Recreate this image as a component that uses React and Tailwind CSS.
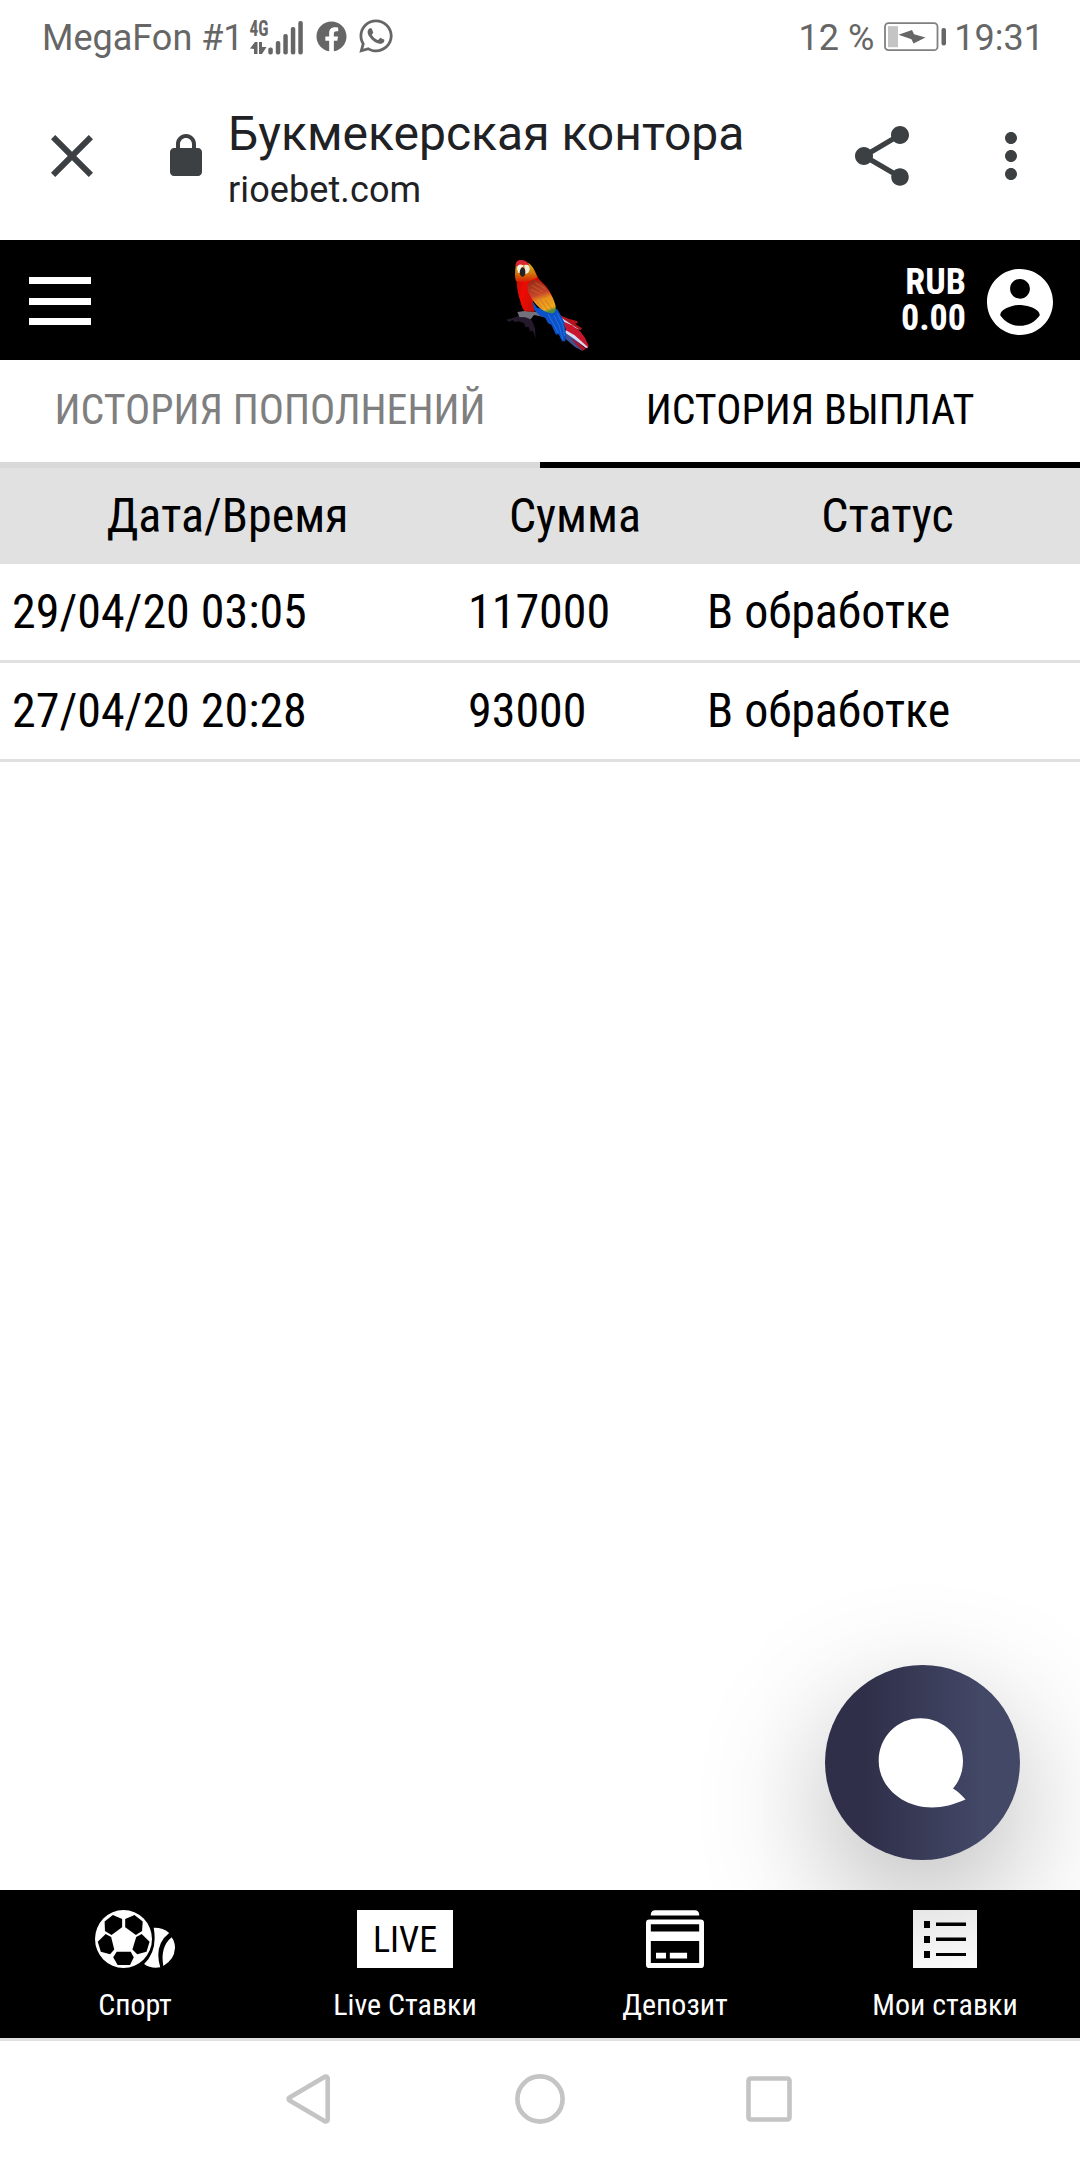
import React from 'react'
import { MdClose, MdShare, MdMoreVert } from 'react-icons/md'
import { FaFacebook, FaWhatsapp } from 'react-icons/fa'

const payouts = [
  { date: '29/04/20 03:05', sum: '117000', status: 'В обработке' },
  { date: '27/04/20 20:28', sum: '93000', status: 'В обработке' }
]

const menu = [
  { label: 'Спорт', icon: <SportIcon /> },
  { label: 'Live Ставки', icon: <LiveIcon /> },
  { label: 'Депозит', icon: <DepositIcon /> },
  { label: 'Мои ставки', icon: <BetsIcon /> }
]

export default function App(){
  return (
    <div className="w-[1080px] h-[2160px] flex flex-col bg-white overflow-hidden font-[Roboto,sans-serif]">
      <StatusBar />
      <BrowserBar />

      {/* page */}
      <div className="relative h-[1798px] flex flex-col overflow-hidden text-black font-['Roboto_Condensed',Roboto,sans-serif]">
        <Header />

        {/* tabs */}
        <div className="grid grid-cols-2 text-[42px] leading-[99px] text-center">
          <div className="h-[108px] border-b-6 border-[#d9d9d9] text-[#7f7f7f]">ИСТОРИЯ ПОПОЛНЕНИЙ</div>
          <div className="h-[108px] border-b-6 border-black">ИСТОРИЯ ВЫПЛАТ</div>
        </div>

        {/* payout table */}
        <div className="text-[48px] leading-[96px]">
          <div className="grid grid-cols-[455px_240px_385px] bg-[#e1e1e1] text-center">
            <div>Дата/Время</div>
            <div>Сумма</div>
            <div>Статус</div>
          </div>
          {payouts.map(p => (
            <div key={p.date} className="grid grid-cols-[456px_240px_384px] border-b-3 border-[#e0e0e0]">
              <div className="px-3">{p.date}</div>
              <div className="px-3">{p.sum}</div>
              <div className="px-[11px]">{p.status}</div>
            </div>
          ))}
        </div>

        {/* bottom menu */}
        <nav className="mt-auto h-[148px] grid grid-cols-4 bg-black text-white">
          {menu.map(m => (
            <div key={m.label} className="flex flex-col items-center pt-5">
              {m.icon}
              <span className="mt-[17px] text-[30px] leading-[40px]">{m.label}</span>
            </div>
          ))}
        </nav>

        {/* chat button */}
        <button className="absolute left-[825px] top-[1425px] size-[195px] rounded-full bg-linear-to-r from-[#2f2f49] from-20% to-[#434867] to-80% shadow-[0_44px_130px_rgba(0,0,0,0.29)]">
          <svg viewBox="0 0 195 195" className="size-full">
            <path d="M95.500 53.300C119 53.300 138 72.300 138 96C138 106.500 134.500 116 128 123.500Q134 127 140.500 134.500C129 139.500 118 142.500 107 142.500C77 142.500 53.700 121 53.700 96C53.700 72.300 72 53.300 95.500 53.300Z" fill="#fff" />
          </svg>
        </button>
      </div>

      <SystemNav />
    </div>
  )
}

function StatusBar(){
  return (
    <div className="h-[76px] flex items-center pl-[42px] pr-[36px] text-[36px] text-[#666]">
      <span className="w-[207px] whitespace-nowrap">MegaFon #1</span>
      <svg viewBox="0 -4 56 40" className="-mt-1 w-[56px] h-[40px]" fill="#666">
        <text x="0.500" y="15.500" fontSize="22" fontWeight="700" textLength="19" lengthAdjust="spacingAndGlyphs" fontFamily="Roboto Condensed">4G</text>
        <path d="M1 28.500L6 22H8.500V34H5V29Z M10 22H13V27H17.500L13 34H10Z" />
        <rect x="19.300" y="27.500" width="4.500" height="7" rx="2" />
        <rect x="26.800" y="21" width="4.500" height="13.500" rx="2" />
        <rect x="34.300" y="14" width="4.500" height="20.500" rx="2" />
        <rect x="41.800" y="7" width="4.500" height="27.500" rx="2" />
        <rect x="49.300" y="1" width="4.500" height="33.500" rx="2" />
      </svg>
      <FaFacebook className="ml-[11px] mb-1 size-[31px]" />
      <FaWhatsapp className="ml-[10px] mb-1 size-[38px]" />
      <span className="ml-auto">12 %</span>
      <svg viewBox="0 0 64 30" className="ml-[10px] mb-[3px] w-[64px] h-[30px]">
        <rect x="1" y="1.200" width="52.500" height="27" rx="3.500" fill="none" stroke="#808080" strokeWidth="1.800" />
        <rect x="4" y="4.200" width="10" height="21" fill="#c4c4c4" />
        <path d="M14.500 12.800L28 8L30 12.300L41.500 15.600L29.500 21.500L27.500 17.300Z" fill="#666" />
        <rect x="57.500" y="6" width="4.500" height="17.500" rx="2" fill="#666" />
      </svg>
      <span className="ml-[6px]">19:31</span>
    </div>
  )
}

function BrowserBar(){
  return (
    <div className="h-[164px] flex text-[#202124]">
      <MdClose className="ml-9 mt-[44px] size-[72px] text-[#3c4043]" />
      <svg viewBox="0 0 24 24" className="ml-[54px] mt-[56px] size-[48px]" fill="#3c4043">
        <path d="M18 8h-1V6c0-2.760-2.240-5-5-5S7 3.240 7 6v2H6c-1.100 0-2 .9-2 2v10c0 1.100.9 2 2 2h12c1.100 0 2-.9 2-2V10c0-1.100-.9-2-2-2zM9 8V6c0-1.660 1.340-3 3-3s3 1.340 3 3v2z" />
      </svg>
      <div className="ml-[18px] mt-[28px] flex flex-col">
        <span className="text-[48px] leading-[60px]">Букмекерская контора</span>
        <span className="text-[36px] leading-[52px] tracking-[0.1px]">rioebet.com</span>
      </div>
      <div className="ml-auto mr-[33px] mt-[44px] flex gap-[57px] text-[#3c4043]">
        <MdShare className="size-[72px]" />
        <MdMoreVert className="size-[72px]" />
      </div>
    </div>
  )
}

function Header(){
  return (
    <header className="h-[120px] flex items-center bg-black text-white">
      <div className="w-[480px] pl-[29px]">
        <div className="w-[62px] h-[48px] mt-[2px] flex flex-col justify-between">
          <div className="h-[7px] bg-white" />
          <div className="h-[7px] bg-white" />
          <div className="h-[7px] bg-white" />
        </div>
      </div>
      <Parrot />
      <div className="ml-auto text-right text-[36px] leading-[36px] font-bold">
        <div>RUB</div>
        <div>0.00</div>
      </div>
      <svg viewBox="2 2 20 20" className="ml-[21px] mr-[27px] mt-[3px] size-[66px]" fill="#fff">
        <path d="M12 2C6.480 2 2 6.480 2 12s4.480 10 10 10 10-4.480 10-10S17.520 2 12 2zm0 3c1.660 0 3 1.340 3 3s-1.340 3-3 3-3-1.340-3-3 1.340-3 3-3zm0 14.200c-2.500 0-4.710-1.280-6-3.220.03-1.990 4-3.080 6-3.080 1.990 0 5.970 1.090 6 3.080-1.290 1.940-3.500 3.220-6 3.220z" />
      </svg>
    </header>
  )
}

function Parrot(){
  return (
    <svg viewBox="0 0 420 360" className="w-[140px] h-[120px]">
      <defs>
        <linearGradient id="body" x1="0" y1="0" x2="1" y2="0.300">
          <stop offset="0" stopColor="#b80d05" />
          <stop offset="0.300" stopColor="#f00a02" />
          <stop offset="1" stopColor="#a81208" />
        </linearGradient>
        <linearGradient id="head" x1="0" y1="0" x2="0" y2="1">
          <stop offset="0" stopColor="#d9b410" />
          <stop offset="0.500" stopColor="#d07c0c" />
          <stop offset="1" stopColor="#d81a04" />
        </linearGradient>
        <linearGradient id="wing" x1="0.300" y1="0" x2="0.600" y2="1">
          <stop offset="0" stopColor="#9c2c1a" />
          <stop offset="0.420" stopColor="#c4452a" />
          <stop offset="0.600" stopColor="#e8901c" />
          <stop offset="0.900" stopColor="#eeaa1e" />
          <stop offset="1" stopColor="#4a8a3c" />
        </linearGradient>
      </defs>
      {/* perch */}
      <path d="M78 239L96 235L114 229L144 228L156 242L165 264L167 294L158 272L150 274L146 260L137 262L132 250L118 244L104 246L98 240L88 246Z" fill="#251a2b" />
      <path d="M112 216L134 213L172 216L192 223L188 230L162 225L152 238L136 232L118 231Z" fill="#73717b" />
      {/* tail */}
      <path d="M236 224L270 238L291 243L294 250L285 251L306 265L302 270L282 264L246 240Z" fill="#b3141c" />
      <path d="M240 230L268 249L300 270L270 258L244 242Z" fill="#c9d4f2" />
      <path d="M248 244L276 256L300 274L314 292L326 318L322 326L296 308L262 280Z" fill="#c9162a" />
      <path d="M256 276L284 294L310 324L306 332L284 320L256 296Z" fill="#41508f" />
      <path d="M256 270L284 286L324 322L318 324L284 298L256 278Z" fill="#d5dbf3" />
      <path d="M272 294L300 312L318 326L308 332L290 316Z" fill="#a8162c" />
      {/* wing tips */}
      <path d="M148 172L172 204L232 208L252 244L258 282L256 304L246 304L236 282L228 284L214 254L204 250L196 234L178 226L160 208Z" fill="#0b52c8" />
      <path d="M222 226L238 258L248 298M204 222L222 254L234 278M232 220L248 254L254 288" stroke="#2a74e6" strokeWidth="2.500" fill="none" />
      {/* body */}
      <path d="M110 104C108 124 112 156 120 180C124 198 130 212 136 214L164 215L158 188L176 146L216 172C212 150 192 132 176 116C170 104 164 98 158 92Z" fill="url(#body)" />
      <path d="M108 74C104 96 104 112 108 124C126 130 156 124 172 112C166 94 158 78 146 70Z" fill="url(#head)" />
      <path d="M107 80C105 66 114 59 124 60C136 61 144 66 149 76L132 74Z" fill="#d92732" />
      <path d="M111 84C113 73 122 71 129 76L128 98L114 99Z" fill="#f5eee5" />
      <path d="M133 76C140 72 148 75 149 86C149 95 143 101 136 102Z" fill="#f0e9df" />
      <path d="M124 83C130 78 137 86 136 96C136 106 131 112 126 110C118 106 117 92 124 83Z" fill="#272020" />
      {/* wing */}
      <path d="M142 136C148 120 164 116 178 124C196 136 212 158 222 182C230 202 230 218 216 220C196 220 174 202 158 180C148 166 140 150 142 136Z" fill="url(#wing)" />
      <path d="M156 136L190 156M152 148L198 170M166 128L196 146M164 176L188 206M180 178L204 212M196 180L216 208" stroke="#d06a28" strokeWidth="2" fill="none" />
    </svg>
  )
}

function SportIcon(){
  return (
    <svg viewBox="275 92 233 172" preserveAspectRatio="none" className="-ml-px w-[80px] h-[58px]" fill="#fff">
      <ellipse cx="358" cy="178" rx="83" ry="86" />
      <g fill="#000">
        <path d="M303 126L327 107L354 119V143L323 166L304 154Z" />
        <path d="M414 126L390 107L363 119V143L394 166L412 154Z" />
        <path d="M283 186L306 163L322 172L331 209L319 223L292 216Z" />
        <path d="M434 186L411 163L395 172L384 209L398 223L425 216Z" />
        <path d="M338 216H379L388 232L377 255H341L328 232Z" />
      </g>
      <path d="M446 145Q472 144 491 160Q446 196 465 262Q438 267 418 252Q458 214 446 145Z" />
      <path d="M498 173Q508 186 508 205Q506 240 474 258Q464 202 498 173Z" />
    </svg>
  )
}

function LiveIcon(){
  return (
    <div className="w-[96px] h-[58px] bg-white text-black text-[36px] leading-[61px] text-center">LIVE</div>
  )
}

function DepositIcon(){
  return (
    <svg viewBox="308 92 168 172" preserveAspectRatio="none" className="w-[58px] h-[58px]" fill="#fff">
      <path d="M322 108V104Q324 93 334 93H450Q460 93 462 104V108Z" />
      <rect x="308" y="120" width="168" height="144" rx="10" />
      <path d="M322 134H462V156H322ZM322 184H462V249H322Z" fill="#000" />
      <path d="M337 219H366V236H337ZM377 219H427V236H377Z" />
    </svg>
  )
}

function BetsIcon(){
  return (
    <svg viewBox="0 0 64 58" className="w-[64px] h-[58px]">
      <rect width="64" height="58" fill="#fff" />
      <path d="M11 11H17V18H11ZM11 26H17V33H11ZM11 41H17V48H11ZM23 12.500H53V16H23ZM23 27.500H53V31H23ZM23 43H53V46H23Z" fill="#000" />
    </svg>
  )
}

function SystemNav(){
  return (
    <div className="h-[122px] border-t-3 border-[#e0e0e0] pt-[33px] pl-[285px] flex gap-[180px]">
      <svg viewBox="0 0 50 50" className="size-[50px]" fill="none" stroke="#c4c4c4" strokeWidth="4.600" strokeLinejoin="round">
        <path d="M4.200 23.800L40.300 2.600Q42.700 2.400 42.700 4.500V45.500Q42.700 47.600 40.300 47.400L4.200 26.200Q3.200 25 4.200 23.800Z" />
      </svg>
      <svg viewBox="0 0 50 50" className="size-[50px]" fill="none" stroke="#c4c4c4" strokeWidth="4.600">
        <circle cx="25" cy="25" r="22.600" />
      </svg>
      <svg viewBox="0 0 50 50" className="size-[50px]" fill="none" stroke="#c4c4c4" strokeWidth="4.600">
        <rect x="3.500" y="4.500" width="41" height="41" rx="2" />
      </svg>
    </div>
  )
}
